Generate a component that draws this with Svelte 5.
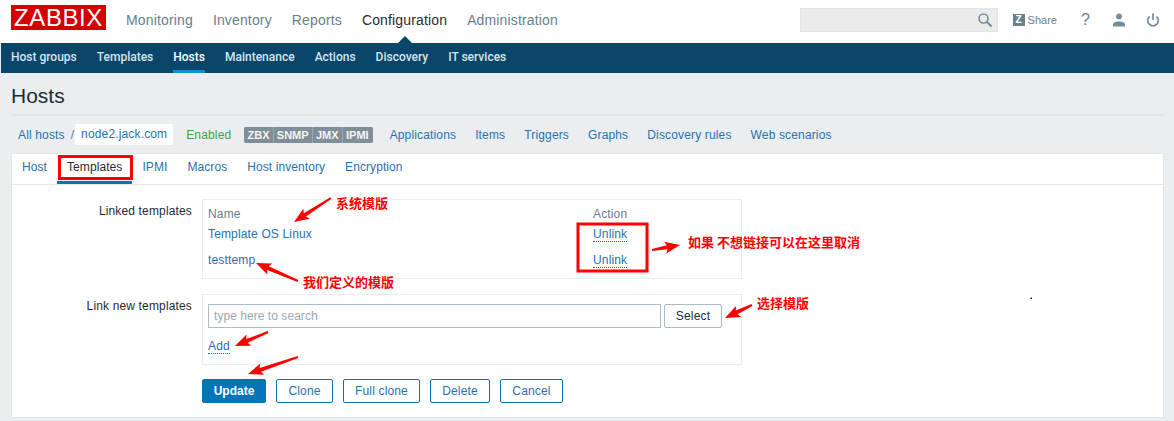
<script>
	const topMenu = ["Monitoring", "Inventory", "Reports", "Configuration", "Administration"];
	const subMenu = ["Host groups", "Templates", "Hosts", "Maintenance", "Actions", "Discovery", "IT services"];
	const hostLinks = ["Applications", "Items", "Triggers", "Graphs", "Discovery rules", "Web scenarios"];
	const tabs = ["Host", "Templates", "IPMI", "Macros", "Host inventory", "Encryption"];
	const badges = ["ZBX", "SNMP", "JMX", "IPMI"];
	const linked = ["Template OS Linux", "testtemp"];
	const secondary = [
		{ label: "Clone", width: 57 },
		{ label: "Full clone", width: 77 },
		{ label: "Delete", width: 60 },
		{ label: "Cancel", width: 63 }
	];

	// red markup drawn on top of the screenshot: [x1, y1, x2, y2]
	const arrows = [
		[331, 198, 294, 222],
		[298, 281, 256, 263],
		[652, 250, 680, 245],
		[752, 305, 725, 318],
		[268, 332, 235, 346],
		[298, 357, 248, 374]
	];

	function arrow(a) {
		const [x1, y1, x2, y2] = a;
		const len = Math.hypot(x2 - x1, y2 - y1);
		const ux = (x2 - x1) / len;
		const uy = (y2 - y1) / len;
		const bx = x2 - ux * 13;
		const by = y2 - uy * 13;
		// tail tapers from thin to thick, then a barbed head
		const pts = [
			[x1 - uy * 1, y1 + ux * 1],
			[bx - uy * 2, by + ux * 2],
			[bx - ux * 2 - uy * 6, by - uy * 2 + ux * 6],
			[x2, y2],
			[bx - ux * 2 + uy * 6, by - uy * 2 - ux * 6],
			[bx + uy * 2, by - ux * 2],
			[x1 + uy * 1, y1 - ux * 1]
		];
		return pts.map((p) => p.join(",")).join(" ");
	}
</script>

<div class="page">
	<header class="top">
		<div class="logo">ZABBIX</div>
		<nav class="top-menu">
			{#each topMenu as item}
				<a href="#top" class:current={item === "Configuration"}>{item}</a>
			{/each}
		</nav>
		<div class="top-tools">
			<div class="search">
				<svg width="16" height="16" viewBox="0 0 16 16" fill="none" stroke="#768d99" stroke-width="1.6">
					<circle cx="6.5" cy="6.5" r="4.5" />
					<path d="M10 10l4.5 4.5" stroke-width="2" />
				</svg>
			</div>
			<a class="share" href="#top"><span class="z">Z</span>Share</a>
			<span class="help">?</span>
			<svg class="user" width="14" height="14" viewBox="0 0 14 14" fill="#768d99">
				<circle cx="7" cy="3.4" r="2.9" />
				<path d="M1 13.5v-2c0-1.800 2.600-3 6-3s6 1.200 6 3v2z" />
			</svg>
			<svg class="power" width="14" height="14" viewBox="0 0 14 14" fill="none" stroke="#768d99" stroke-width="1.7">
				<path d="M3.600 3.500a5.300 5.300 0 1 0 6.800 0" />
				<path d="M7 0.500v6.500" />
			</svg>
		</div>
		<span class="caret"></span>
	</header>

	<nav class="sub-menu">
		{#each subMenu as item}
			<a href="#top" class:current={item === "Hosts"}>{item}</a>
		{/each}
	</nav>

	<main class="content">
		<h1>Hosts</h1>

		<div class="host-bar">
			<a class="link" href="#top">All hosts</a>
			<span class="sep">/</span>
			<span class="host-name">node2.jack.com</span>
			<span class="enabled">Enabled</span>
			<span class="badges">
				{#each badges as b}<span>{b}</span>{/each}
			</span>
			<span class="host-links">
				{#each hostLinks as l}<a class="link" href="#top">{l}</a>{/each}
			</span>
		</div>

		<section class="panel">
			<div class="tabs">
				{#each tabs as t}
					<a href="#top" class:active={t === "Templates"}>{t}</a>
				{/each}
			</div>

			<div class="form">
				<div class="row linked-row">
					<div class="label">Linked templates</div>
					<div class="box linked">
						<div class="thead"><span class="c-name">Name</span><span>Action</span></div>
						{#each linked as name}
							<div class="trow">
								<a class="link c-name" href="#top">{name}</a>
								<span class="dotted">Unlink</span>
							</div>
						{/each}
					</div>
				</div>

				<div class="row new-row">
					<div class="label">Link new templates</div>
					<div class="box new">
						<div class="search-row">
							<div class="multiselect">type here to search</div>
							<button class="select">Select</button>
						</div>
						<span class="dotted add">Add</span>
					</div>
				</div>

				<div class="buttons">
					<button class="primary">Update</button>
					{#each secondary as b}
						<button class="outline" style="width: {b.width}px">{b.label}</button>
					{/each}
				</div>
			</div>
		</section>
	</main>

	<!-- hand-drawn annotations -->
	<svg class="marks" width="1174" height="421">
		<rect x="59.500" y="156.500" width="72" height="22" fill="none" stroke="#f00" stroke-width="3" />
		<rect x="578" y="224" width="69" height="47" fill="none" stroke="#f00" stroke-width="3" />
		{#each arrows as a}
			<polygon points={arrow(a)} fill="#f00" />
		{/each}
		<rect x="1030.500" y="297.500" width="1.500" height="1.500" fill="#222" />
	</svg>
	<span class="note n1">系统模版</span>
	<span class="note n2">我们定义的模版</span>
	<span class="note n3">如果 不想链接可以在这里取消</span>
	<span class="note n4">选择模版</span>
</div>

<style>
	:global(body) {
		margin: 0;
		background: #ebeef0;
	}
	.page {
		position: relative;
		width: 1174px;
		height: 421px;
		overflow: hidden;
		font: 12px "Liberation Sans", Arial, sans-serif;
		letter-spacing: 0.15px;
		color: #1f2c33;
	}
	a {
		text-decoration: none;
	}
	.top {
		position: relative;
		display: flex;
		align-items: center;
		height: 43px;
		background: #fff;
		padding-left: 11px;
		box-sizing: border-box;
	}
	.logo {
		width: 95px;
		height: 25px;
		margin-top: -8px;
		background: #d40000;
		color: #fff;
		font-size: 24px;
		line-height: 26px;
		letter-spacing: 0.6px;
		text-align: center;
	}
	.top-menu {
		display: flex;
		margin-left: 10px;
		margin-top: -3px;
	}
	.top-menu a {
		padding: 0 10px;
		font-size: 14px;
		letter-spacing: 0.15px;
		color: #69808d;
	}
	.top-menu a.current {
		color: #1f2c33;
	}
	.top-tools {
		display: flex;
		align-items: center;
		margin-left: auto;
		margin-top: -3px;
		padding-right: 14px;
	}
	.search {
		display: flex;
		align-items: center;
		justify-content: flex-end;
		width: 198px;
		height: 24px;
		box-sizing: border-box;
		padding-right: 4px;
		background: #ebebeb;
		border: 1px solid #e4e4e4;
	}
	.share {
		display: flex;
		align-items: center;
		margin-left: 15px;
		font-size: 11px;
		letter-spacing: 0;
		color: #69808d;
	}
	.z {
		width: 12px;
		height: 12px;
		margin-right: 3px;
		background: #69808d;
		color: #fff;
		font-size: 10px;
		font-weight: bold;
		line-height: 12px;
		text-align: center;
	}
	.help {
		margin-left: 24px;
		font-size: 16px;
		color: #69808d;
	}
	.user {
		margin-left: 22px;
	}
	.power {
		margin-left: 20px;
	}
	.caret {
		position: absolute;
		left: 398px;
		bottom: 0;
		border: 7px solid transparent;
		border-top: 0;
		border-bottom-color: #0a466a;
	}
	.sub-menu {
		display: flex;
		height: 30px;
		margin-left: 1px;
		background: #0a466a;
	}
	.sub-menu a {
		margin: 0 10px;
		line-height: 29px;
		font-family: Roboto, "Liberation Sans", sans-serif;
		font-weight: 500;
		letter-spacing: 0;
		color: #d6e4ec;
	}
	.sub-menu a.current {
		color: #fff;
		border-bottom: 3px solid #0f8fd5;
		height: 27px;
	}
	.content {
		padding: 0 10px 0 11px;
	}
	h1 {
		margin: 0;
		padding: 11px 0 6px;
		height: 24px;
		line-height: 24px;
		font-size: 21px;
		font-weight: normal;
		letter-spacing: 0;
		border-bottom: 2px solid #e2e6e9;
		color: #1f2c33;
	}
	.link {
		color: #2a70ad;
	}
	.host-bar {
		display: flex;
		align-items: center;
		height: 37px;
		padding-left: 7px;
	}
	.sep {
		margin: 0 1px 0 6px;
		color: #69808d;
	}
	.host-name {
		width: 98px;
		height: 21px;
		line-height: 21px;
		text-align: center;
		background: #fff;
		border-radius: 2px;
		color: #2a70ad;
	}
	.enabled {
		margin-left: 13px;
		color: #429e47;
	}
	.badges {
		display: flex;
		height: 16px;
		margin-left: 13px;
		background: #9aa7ae;
		border-radius: 2px;
		overflow: hidden;
		font-size: 11px;
		font-weight: bold;
		line-height: 16px;
		letter-spacing: 0;
		color: #f4f6f7;
	}
	.badges span {
		padding: 0 3.2px;
		margin-right: 1px;
		background: #7f8e97;
	}
	.badges span:last-child {
		margin-right: 0;
		padding-right: 4px;
	}
	.host-links {
		display: flex;
		gap: 19px;
		margin-left: 17px;
	}
	.panel {
		height: 265px;
		box-sizing: border-box;
		background: #fff;
		border: 1px solid #e2e6e9;
	}
	.tabs {
		display: flex;
		height: 30px;
		border-bottom: 1px solid #e2e6e9;
	}
	.tabs a {
		padding: 0 10px;
		height: 27px;
		line-height: 27px;
		letter-spacing: 0.08px;
		color: #2a70ad;
		border-bottom: 3px solid transparent;
	}
	.tabs a.active {
		color: #1f2c33;
		border-bottom-color: #0275b8;
	}
	.form {
		padding-top: 14px;
	}
	.row {
		display: flex;
		align-items: flex-start;
		margin-bottom: 15px;
	}
	.new-row {
		margin-bottom: 14px;
	}
	.label {
		width: 180px;
		padding-top: 5px;
		margin-right: 10px;
		text-align: right;
		line-height: 14px;
	}
	.box {
		width: 540px;
		box-sizing: border-box;
		border: 1px solid #ebeef0;
		padding: 0 5px;
	}
	.linked {
		height: 80px;
		padding-top: 7px;
	}
	.thead,
	.trow {
		display: flex;
		line-height: 14px;
	}
	.thead {
		color: #69808d;
		height: 20px;
	}
	.trow {
		height: 26px;
		align-items: flex-start;
	}
	.c-name {
		width: 385px;
	}
	.dotted {
		color: #2a70ad;
		border-bottom: 1px dotted #0275b8;
	}
	.new {
		height: 71px;
		padding-top: 9px;
	}
	.search-row {
		display: flex;
		gap: 3px;
	}
	.multiselect {
		width: 453px;
		height: 24px;
		box-sizing: border-box;
		padding-left: 5px;
		border: 1px solid #acbbc2;
		line-height: 22px;
		letter-spacing: 0.05px;
		color: #9aa8b0;
	}
	button {
		font: inherit;
		letter-spacing: inherit;
		height: 24px;
		box-sizing: border-box;
		border-radius: 2px;
		background: #fff;
		padding: 0;
	}
	.select {
		width: 58px;
		border: 1px solid #acbbc2;
		color: #1f2c33;
	}
	.add {
		display: inline-block;
		margin-top: 11px;
		line-height: 14px;
	}
	.buttons {
		display: flex;
		gap: 10px;
		margin-left: 190px;
	}
	.primary {
		width: 64px;
		border: 1px solid #0275b8;
		background: #0275b8;
		color: #fff;
		font-weight: bold;
		letter-spacing: 0;
	}
	.outline {
		border: 1px solid #0275b8;
		color: #2a70ad;
	}
	.marks {
		position: absolute;
		left: 0;
		top: 0;
		pointer-events: none;
	}
	.note {
		position: absolute;
		color: #f00;
		font: bold 13px/14px "Noto Sans CJK SC", sans-serif;
		letter-spacing: 0;
		white-space: nowrap;
	}
	.n1 { left: 336px; top: 196px; }
	.n2 { left: 303px; top: 275px; }
	.n3 { left: 688px; top: 235px; }
	.n4 { left: 757px; top: 296px; }
</style>
